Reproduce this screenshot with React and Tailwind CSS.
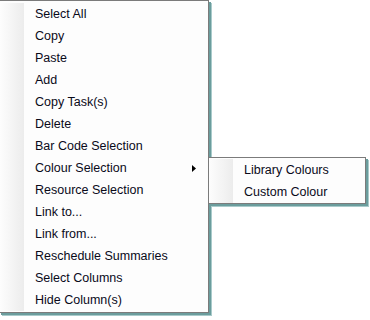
const ITEMS = [
  'Select All',
  'Copy',
  'Paste',
  'Add',
  'Copy Task(s)',
  'Delete',
  'Bar Code Selection',
  'Colour Selection',
  'Resource Selection',
  'Link to...',
  'Link from...',
  'Reschedule Summaries',
  'Select Columns',
  'Hide Column(s)',
];

const SUB = ['Library Colours', 'Custom Colour'];

function Row({ label, arrow }) {
  return (
    <div className="flex h-[22px] items-center">
      <div className="h-full w-[24px] shrink-0 bg-gradient-to-r from-[#fdfdfd] to-[#ececec]" />
      <span className="pl-[11px] pt-[1px] text-[12.5px] leading-none text-[#0a0a1a]">{label}</span>
      {arrow && (
        <svg className="ml-auto mr-[12px]" width="4" height="7" viewBox="0 0 4 7">
          <path d="M0 0 L4 3.5 L0 7 Z" fill="#000" />
        </svg>
      )}
    </div>
  );
}

export default function App() {
  return (
    <div className="relative h-[320px] w-[370px] overflow-hidden bg-white font-['Liberation_Sans',Arial,sans-serif]">
      <div className="absolute left-[-1px] top-0 w-[210px] border border-[#7b7b7b] bg-[#fdfdfd] pt-[2px] pb-[1px] shadow-[2px_2px_0_#6b9d9d,3px_3px_0_#a9cbcb]">
        {ITEMS.map((it) => (
          <Row key={it} label={it} arrow={it === 'Colour Selection'} />
        ))}
      </div>
      <div className="absolute left-[208px] top-[157px] w-[158px] border border-[#7b7b7b] bg-[#fdfdfd] pt-[1px] shadow-[2px_2px_0_#6b9d9d,3px_3px_0_#a9cbcb]">
        {SUB.map((it) => (
          <Row key={it} label={it} />
        ))}
      </div>
    </div>
  );
}
